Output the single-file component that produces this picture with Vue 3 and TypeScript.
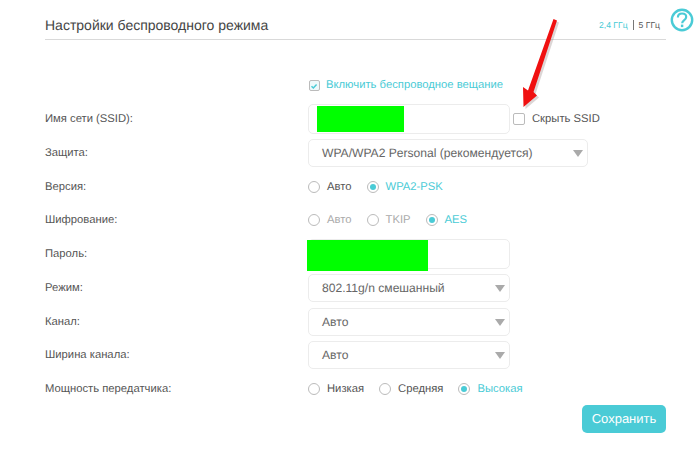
<script setup lang="ts">
interface Opt { label: string; on?: boolean; muted?: boolean }
const version: Opt[] = [{ label: 'Авто' }, { label: 'WPA2-PSK', on: true }]
const cipher: Opt[] = [{ label: 'Авто', muted: true }, { label: 'TKIP', muted: true }, { label: 'AES', on: true }]
const power: Opt[] = [{ label: 'Низкая' }, { label: 'Средняя' }, { label: 'Высокая', on: true }]
</script>

<template>
  <main class="page">
    <header class="head">
      <h1 class="title">Настройки беспроводного режима</h1>
      <div class="bands"><span class="band-on">2,4 ГГц</span><i class="sep"></i><span>5 ГГц</span></div>
      <svg class="help" viewBox="0 0 24 24" width="24" height="24" aria-label="Справка">
        <circle cx="12" cy="12" r="10.2" fill="none" stroke="#4acbd6" stroke-width="2.4" />
        <path d="M7.9 9.4c0-2.4 1.8-3.9 4.2-3.9 2.4 0 4.1 1.4 4.1 3.4 0 1.7-1 2.5-2.2 3.4-1.1.8-1.8 1.4-1.8 2.9" fill="none" stroke="#4acbd6" stroke-width="2.2" />
        <rect x="10.9" y="16.6" width="2.4" height="2.5" fill="#4acbd6" />
      </svg>
    </header>

    <section class="form">
      <div class="row">
        <span></span>
        <label class="check on"><span class="box"><svg viewBox="0 0 12 12" width="12" height="12"><path d="M3 6.2l2.2 2.2 3.9-4.2" fill="none" stroke="#4acbd6" stroke-width="1.8" /></svg></span>Включить беспроводное вещание</label>
      </div>
      <div class="row">
        <span class="label">Имя сети (SSID):</span>
        <div class="inline">
          <div class="field"><span class="mask mask-ssid"></span></div>
          <label class="check hide"><span class="box"></span>Скрыть SSID</label>
        </div>
      </div>
      <div class="row">
        <span class="label">Защита:</span>
        <div class="field select wide">WPA/WPA2 Personal (рекомендуется)</div>
      </div>
      <div class="row">
        <span class="label">Версия:</span>
        <div class="radios">
          <label v-for="o in version" :key="o.label" class="radio" :class="{ on: o.on, muted: o.muted }"><span class="dot"></span>{{ o.label }}</label>
        </div>
      </div>
      <div class="row">
        <span class="label">Шифрование:</span>
        <div class="radios">
          <label v-for="o in cipher" :key="o.label" class="radio" :class="{ on: o.on, muted: o.muted }"><span class="dot"></span>{{ o.label }}</label>
        </div>
      </div>
      <div class="row">
        <span class="label">Пароль:</span>
        <div class="field tall"><span class="mask mask-pass"></span></div>
      </div>
      <div class="row">
        <span class="label">Режим:</span>
        <div class="field select">802.11g/n смешанный</div>
      </div>
      <div class="row">
        <span class="label">Канал:</span>
        <div class="field select">Авто</div>
      </div>
      <div class="row">
        <span class="label">Ширина канала:</span>
        <div class="field select">Авто</div>
      </div>
      <div class="row">
        <span class="label">Мощность передатчика:</span>
        <div class="radios">
          <label v-for="o in power" :key="o.label" class="radio" :class="{ on: o.on, muted: o.muted }"><span class="dot"></span>{{ o.label }}</label>
        </div>
      </div>
    </section>

    <div class="actions"><button class="save" type="button">Сохранить</button></div>

    <svg class="arrow" viewBox="0 0 700 140" width="700" height="140" aria-hidden="true">
      <path d="M555.5 21 L559 22.5 L535.5 94 L539 97.5 L525.5 109 L525 89 L530 92.5 Z" fill="#806a6a" fill-opacity=".28" />
      <path d="M553.5 19 L557 20.5 L533.5 92 L537 95.5 L523.5 107 L523 87 L528 90.5 Z" fill="#f01010" />
    </svg>
  </main>
</template>

<style>
html, body { margin: 0; background: #fff; }
</style>

<style scoped>
.page {
  position: relative;
  width: 700px;
  height: 457px;
  box-sizing: border-box;
  padding: 0 34px 0 45px;
  font-family: "Liberation Sans", Arial, sans-serif;
  font-size: 11.25px;
  text-rendering: geometricPrecision;
  color: #555;
  overflow: hidden;
}
.head {
  position: relative;
  display: flex;
  align-items: flex-end;
  justify-content: space-between;
  height: 39px;
  border-bottom: 1px solid #d9d9d9;
}
.title {
  margin: 0 0 4px;
  font-size: 14px;
  font-weight: 400;
  line-height: 20px;
  color: #444;
}
.bands {
  display: flex;
  align-items: center;
  gap: 5px;
  margin: 0 6px 8px 0;
  font-size: 8.6px;
  line-height: 12px;
  color: #555;
}
.band-on { color: #4acbd6; }
.sep { width: 1px; height: 10px; background: #777; }
.help { position: absolute; left: 625px; top: 8px; }
.form {
  display: grid;
  grid-auto-rows: 33.75px;
  margin-top: 28.5px;
}
.row {
  display: grid;
  grid-template-columns: 263px 1fr;
  align-items: center;
}
.label { line-height: 16px; }
.inline { display: flex; align-items: center; gap: 3px; }
.field {
  position: relative;
  width: 202px;
  height: 28px;
  box-sizing: border-box;
  padding: 0 13px;
  border: 1px solid #ececec;
  border-radius: 5px;
  background: #fff;
  font-size: 12.1px;
  line-height: 26px;
  color: #666;
}
.inline .field, .field.tall { height: 30px; }
.select::after {
  content: "";
  position: absolute;
  right: 4px;
  top: 10px;
  border-left: 5.5px solid transparent;
  border-right: 5.5px solid transparent;
  border-top: 7px solid #aaa;
}
.wide { width: 280px; }
.mask { position: absolute; background: #0f0; }
.mask-ssid { left: 8px; top: 1px; width: 87px; height: 26px; }
.mask-pass { left: -2px; top: 0; width: 121px; height: 31px; }
.check { display: flex; align-items: center; gap: 6px; line-height: 16px; }
.check.on { color: #4acbd6; padding-left: 1px; }
.box {
  width: 10px;
  height: 10px;
  border: 1px solid #bbb;
  border-radius: 2px;
  display: inline-flex;
  background: #fff;
  flex: none;
}
.check.on .box { width: 9px; height: 9px; background: #eef9fa; }
.check.on .box svg { margin: -1px 0 0 -1px; }
.hide { gap: 7px; }
.radios { display: flex; align-items: center; gap: 15px; }
.radio { display: flex; align-items: center; gap: 7px; line-height: 16px; }
.radio.muted { color: #aaa; }
.radio.on { color: #4acbd6; }
.dot {
  position: relative;
  width: 10px;
  height: 10px;
  border: 1px solid #bbb;
  border-radius: 50%;
  flex: none;
}
.radio.on .dot::after {
  content: "";
  position: absolute;
  inset: 2px;
  border-radius: 50%;
  background: #4acbd6;
}
.actions { display: flex; justify-content: flex-end; margin-top: -1px; }
.save {
  width: 84px;
  height: 28px;
  padding: 0;
  border: 0;
  border-radius: 5px;
  background: #4acbd6;
  color: #fff;
  font: 400 13px/28px "Liberation Sans", Arial, sans-serif;
  text-rendering: geometricPrecision;
}
.arrow { position: absolute; left: 0; top: 0; pointer-events: none; }
</style>
